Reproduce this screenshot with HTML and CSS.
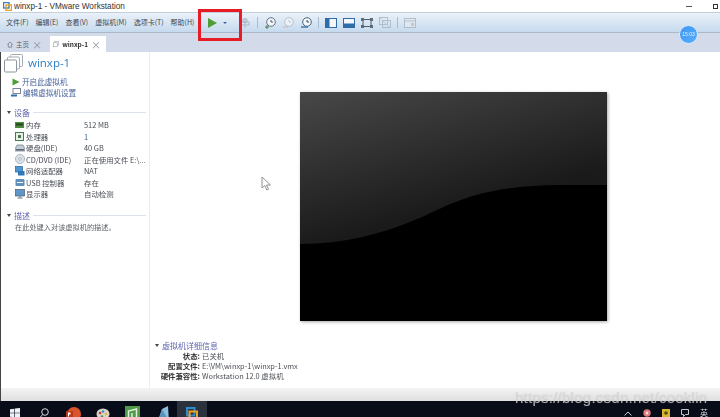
FILE: index.html
```html
<!DOCTYPE html>
<html lang="zh-CN">
<head>
    <meta charset="UTF-8">
    <title>winxp-1 - VMware Workstation</title>
    <link rel="stylesheet" href="styles.css">
</head>
<body>
    <div class="window">
        <!-- Title bar -->
        <div class="titlebar">
            <svg class="app-icon" width="9" height="9" viewBox="0 0 9 9"><rect x="0.5" y="0.5" width="5.5" height="5.5" fill="none" stroke="#3c7fb8" stroke-width="1.4"/><rect x="3" y="3" width="5.5" height="5.5" fill="none" stroke="#e8a020" stroke-width="1.4"/></svg>
            <span class="title-text">winxp-1 - VMware Workstation</span>
            <span class="win-min"></span>
            <span class="win-max"></span>
        </div>

        <!-- Menu and toolbar -->
        <div class="toolbar">
            <div class="menus">
                <span class="menu">文件(F)</span>
                <span class="menu">编辑(E)</span>
                <span class="menu">查看(V)</span>
                <span class="menu">虚拟机(M)</span>
                <span class="menu">选项卡(T)</span>
                <span class="menu">帮助(H)</span>
            </div>
            <svg class="tool-play" width="9" height="10" viewBox="0 0 9 10"><path d="M0 0 L9 5 L0 10Z" fill="#4f9e35"/></svg>
            <span class="caret"></span>
            <svg class="tool" width="12" height="12" viewBox="0 0 12 12"><path d="M6 1v10M2 5h8v3H2zM4 2h4v3H4z" fill="none" stroke="#a9b6c4"/></svg>
            <span class="tool-sep"></span>
            <svg class="tool" width="12" height="12" viewBox="0 0 12 12"><circle cx="7" cy="5" r="4.3" fill="#f3f6fa" stroke="#5d7286"/><path d="M7 3v2h2" fill="none" stroke="#44586a"/><path d="M1 10h4M3 8v4" stroke="#4b7f50"/></svg>
            <svg class="tool dim" width="12" height="12" viewBox="0 0 12 12"><circle cx="7" cy="5" r="4.3" fill="#f3f6fa" stroke="#aab4bf"/><path d="M7 3v2h2" fill="none" stroke="#b8c0c8"/><path d="M1 10h5" stroke="#c9a99a"/></svg>
            <svg class="tool" width="12" height="12" viewBox="0 0 12 12"><circle cx="7" cy="5" r="4.3" fill="#f3f6fa" stroke="#4a6478"/><path d="M7 3v2h2" fill="none" stroke="#34495a"/><path d="M1 10h7" stroke="#2f78b5" stroke-width="1.4"/></svg>
            <span class="tool-sep"></span>
            <svg class="tool" width="12" height="10" viewBox="0 0 12 10"><rect x="0.5" y="0.5" width="11" height="9" fill="#f4f8fc" stroke="#2e6da8"/><rect x="0.5" y="0.5" width="4" height="9" fill="#2e6da8"/></svg>
            <svg class="tool" width="12" height="10" viewBox="0 0 12 10"><rect x="0.5" y="0.5" width="11" height="9" fill="#f4f8fc" stroke="#2e6da8"/><rect x="0.5" y="5.5" width="11" height="4" fill="#2e6da8"/></svg>
            <svg class="tool" width="12" height="10" viewBox="0 0 12 10"><rect x="2" y="1.5" width="8" height="7" fill="none" stroke="#4f5f6e"/><path d="M0 0h3v3H0zM9 0h3v3H9zM0 7h3v3H0zM9 7h3v3H9z" fill="#5c6c7b"/></svg>
            <svg class="tool dim" width="12" height="11" viewBox="0 0 12 11"><rect x="0.5" y="0.5" width="8" height="7" fill="none" stroke="#a5b0bc"/><rect x="3.5" y="3.5" width="8" height="7" fill="none" stroke="#a5b0bc"/><path d="M1 1l9 9" stroke="#b5bec8"/></svg>
            <span class="tool-sep"></span>
            <svg class="tool dim" width="12" height="10" viewBox="0 0 12 10"><rect x="0.5" y="0.5" width="11" height="9" fill="#e4e9ef" stroke="#a5b0bc"/><path d="M0 3h12" stroke="#a5b0bc"/><rect x="7" y="5" width="3" height="3" fill="#b8c1cb"/></svg>
        </div>

        <!-- Tabs -->
        <div class="tabs">
            <div class="tab">
                <svg width="9" height="9" viewBox="0 0 9 9"><path d="M0.5 4.5 L4.5 0.8 L8.5 4.5 M2 3.8V8.5H7V3.8" fill="none" stroke="#66707c"/></svg>
                <span class="tab-name">主页</span>
                <span class="tab-close">×</span>
            </div>
            <div class="tab active">
                <svg width="10" height="10" viewBox="0 0 10 10"><rect x="3" y="0.5" width="6.5" height="6" fill="#fff" stroke="#9aa3ad"/><rect x="0.5" y="3" width="6.5" height="6.5" fill="#fff" stroke="#9aa3ad"/></svg>
                <span class="tab-name">winxp-1</span>
                <span class="tab-close">×</span>
            </div>
        </div>

        <div class="body">
            <!-- Left panel -->
            <div class="sidebar">
                <div class="vm-head">
                    <svg width="19" height="19" viewBox="0 0 19 19"><rect x="6.5" y="0.5" width="12" height="12" rx="1" fill="#fff" stroke="#a3abb4"/><rect x="3.5" y="3" width="12" height="12" rx="1" fill="#fff" stroke="#a3abb4"/><rect x="0.5" y="6" width="12" height="12" rx="1" fill="#fff" stroke="#8c959f"/></svg>
                    <span class="vm-name">winxp-1</span>
                </div>
                <div class="action">
                    <svg width="8" height="8" viewBox="0 0 8 8"><path d="M0.5 0.5 L7.5 4 L0.5 7.5Z" fill="#4f9e35"/></svg>
                    <span>开启此虚拟机</span>
                </div>
                <div class="action">
                    <svg width="10" height="9" viewBox="0 0 10 9"><rect x="2" y="0.5" width="7.5" height="5" fill="#fff" stroke="#7d8894"/><path d="M0 7.5h6" stroke="#2f6ea8" stroke-width="2"/></svg>
                    <span>编辑虚拟机设置</span>
                </div>

                <div class="section-head devices"><span class="arrow"></span><span class="section-title">设备</span><span class="section-line"></span></div>
                <div class="device-list">
                    <svg width="9" height="8" viewBox="0 0 9 8"><rect y="1" width="9" height="6" fill="#4d8a3c"/><rect x="1" y="2.5" width="7" height="2" fill="#26431f"/></svg>
                    <span>内存</span><span>512 MB</span>
                    <svg width="9" height="9" viewBox="0 0 9 9"><rect x="0.5" y="0.5" width="8" height="8" fill="#e9f1e6" stroke="#447a4a"/><rect x="3" y="3" width="3" height="3" fill="#447a4a"/></svg>
                    <span>处理器</span><span class="num">1</span>
                    <svg width="10" height="8" viewBox="0 0 10 8"><path d="M2 1h6l2 4v2H0V5z" fill="#c4ccd4" stroke="#6f7a86" stroke-width="0.7"/><rect x="1" y="5" width="8" height="1.5" fill="#5d6975"/></svg>
                    <span>硬盘(IDE)</span><span>40 GB</span>
                    <svg width="10" height="10" viewBox="0 0 10 10"><circle cx="5" cy="5" r="4.6" fill="#dbe1e8" stroke="#9aa4ae" stroke-width="0.7"/><circle cx="5" cy="5" r="1.3" fill="#fff" stroke="#8a949e" stroke-width="0.6"/></svg>
                    <span>CD/DVD (IDE)</span><span>正在使用文件 E:\...</span>
                    <svg width="10" height="10" viewBox="0 0 10 10"><rect x="0.5" y="0.5" width="7" height="5.5" fill="#4e95d3" stroke="#2d6496" stroke-width="0.7"/><rect x="3" y="5" width="6.5" height="4.5" fill="#2f77b8"/></svg>
                    <span>网络适配器</span><span>NAT</span>
                    <svg width="10" height="9" viewBox="0 0 10 9"><rect x="0.5" y="1" width="9" height="7" rx="1" fill="#5f8fbd"/><path d="M2 4.5h6" stroke="#fff"/></svg>
                    <span>USB 控制器</span><span>存在</span>
                    <svg width="10" height="10" viewBox="0 0 10 10"><rect x="0.5" y="0.5" width="9" height="6.5" fill="#5f95c9" stroke="#4a5e72" stroke-width="0.7"/><path d="M2.5 9h5M5 7v2" stroke="#6a7886"/></svg>
                    <span>显示器</span><span>自动检测</span>
                </div>

                <div class="section-head describe"><span class="arrow"></span><span class="section-title">描述</span><span class="section-line"></span></div>
                <p class="describe-text">在此处键入对该虚拟机的描述。</p>
            </div>

            <!-- Right panel -->
            <div class="content">
                <svg class="preview" width="307" height="229" viewBox="0 0 307 229">
                    <defs>
                        <linearGradient id="gloss" gradientUnits="userSpaceOnUse" x1="0" y1="0" x2="39" y2="147">
                            <stop offset="0" stop-color="#484848"/>
                            <stop offset="1" stop-color="#1a1a1a"/>
                        </linearGradient>
                    </defs>
                    <rect width="307" height="229" fill="url(#gloss)"/>
                    <path d="M0 152 C55 152 100 136 137 118 C165 105 195 93 265 93 L307 93 V229 H0Z" fill="#000"/>
                </svg>
                <div class="details">
                    <div class="details-head"><span class="arrow"></span><span class="section-title">虚拟机详细信息</span></div>
                    <div class="details-grid">
                        <b>状态:</b><span>已关机</span>
                        <b>配置文件:</b><span>E:\VM\winxp-1\winxp-1.vmx</span>
                        <b>硬件兼容性:</b><span>Workstation 12.0 虚拟机</span>
                    </div>
                </div>
            </div>
        </div>

        <div class="statusbar"></div>

        <!-- Windows taskbar, cut off by the bottom edge of the shot -->
        <div class="taskbar">
            <span class="task-slot"><svg width="10" height="10" viewBox="0 0 10 10"><path d="M0 1.3L4.4 .7V4.7H0zM5 .6L10 0V4.7H5zM0 5.3H4.4V9.3L0 8.7zM5 5.3H10V10L5 9.4z" fill="#eef2f6"/></svg></span>
            <span class="task-slot"><svg width="10" height="11" viewBox="0 0 10 11"><circle cx="6" cy="4" r="3.3" fill="none" stroke="#d5d9de"/><path d="M3.6 6.5L.7 10" stroke="#d5d9de"/></svg></span>
            <span class="task-slot"><svg width="15" height="15" viewBox="0 0 15 15"><circle cx="8" cy="8" r="7" fill="#d9542b"/><rect x="0" y="5" width="7" height="7" fill="#b7391a"/><path d="M2 6.5h2.5v2H3V10.5H2z" fill="#fff"/></svg></span>
            <span class="task-slot"><svg width="14" height="14" viewBox="0 0 14 14"><ellipse cx="7" cy="8" rx="6.5" ry="5.5" fill="#d8d3c8"/><circle cx="4" cy="7" r="1.3" fill="#c33"/><circle cx="7" cy="5.5" r="1.3" fill="#3a8fd0"/><circle cx="10" cy="8" r="1.3" fill="#e4b72f"/><circle cx="6" cy="10.5" r="1.3" fill="#4b9c46"/></svg></span>
            <span class="task-slot"><svg width="15" height="15" viewBox="0 0 15 15"><rect width="15" height="15" fill="#4e9a47"/><path d="M3.5 12V5l8-2v9" fill="none" stroke="#dff0da" stroke-width="1.5"/><path d="M7 12V7" stroke="#dff0da" stroke-width="1.5"/></svg></span>
            <span class="task-slot"><svg width="13" height="15" viewBox="0 0 13 15"><path d="M2 15L6 3 12 0 13 15Z" fill="#8fbede"/><path d="M6 3L13 15H2Z" fill="#5a93bd"/></svg></span>
            <span class="task-slot active"><svg width="12" height="13" viewBox="0 0 12 13"><rect x="1" y="1" width="7.5" height="7.5" fill="none" stroke="#2e8bd0" stroke-width="2"/><rect x="3.5" y="4.5" width="7.5" height="7.5" fill="none" stroke="#eda31f" stroke-width="2"/></svg></span>
            <span class="tray">
                <svg width="8" height="5" viewBox="0 0 8 5"><path d="M.5 4.5L4 1l3.5 3.5" fill="none" stroke="#c5c9ce"/></svg>
                <svg width="8" height="8" viewBox="0 0 8 8"><circle cx="4" cy="4" r="3.7" fill="#d97a7a"/><circle cx="4" cy="4" r="1.5" fill="#f3d6d6"/></svg>
                <svg width="8" height="8" viewBox="0 0 8 8"><rect width="8" height="8" fill="#d7b52e"/><circle cx="4" cy="4" r="1.8" fill="#554a12"/></svg>
                <svg width="8" height="8" viewBox="0 0 8 8"><path d="M.5.5h7v5H4.5L2.5 7.5V5.5H.5z" fill="none" stroke="#c5c9ce"/></svg>
                <span class="tray-lang">英</span>
            </span>
        </div>

        <!-- Things lying over the screenshot -->
        <div class="highlight"></div>
        <div class="clock-badge">15:03</div>
        <svg class="cursor" width="11" height="15" viewBox="0 0 11 15"><path d="M1 1V12L3.8 9.5 5.8 14 7.5 13.2 5.5 9H9.5Z" fill="#fff" stroke="#777" stroke-width="0.8"/></svg>
        <div class="watermark">https://blog.csdn.net/cooklin</div>
    </div>
</body>
</html>
```

FILE: styles.css
```css
* {
    margin: 0;
    padding: 0;
    box-sizing: border-box;
}

html, body {
    width: 720px;
    height: 417px;
    overflow: hidden;
}

body {
    font-family: "Noto Sans CJK SC", "Liberation Sans", sans-serif;
    font-size: 8px;
    line-height: 11px;
    color: #444;
    background-color: #fff;
}

.window {
    position: relative;
    display: flex;
    flex-direction: column;
    width: 720px;
    height: 417px;
    filter: blur(0.35px);
}

/* Title bar */
.titlebar {
    display: flex;
    align-items: center;
    height: 12px;
    padding-left: 3px;
    background-color: #fff;
}

.app-icon {
    margin-right: 2px;
}

.title-text {
    font-family: "Liberation Sans", sans-serif;
    font-size: 8.2px;
    color: #333;
    white-space: nowrap;
}

.win-min {
    width: 6px;
    height: 1px;
    margin-left: auto;
    margin-right: 21px;
    background-color: #555;
}

.win-max {
    width: 5px;
    height: 5px;
    margin-right: 2px;
    border: 1px solid #333;
}

/* Toolbar */
.toolbar {
    display: flex;
    align-items: center;
    height: 21px;
    padding-left: 6px;
    border-top: 1px solid #c3d0db;
    border-bottom: 1px solid #aab8c9;
    background: linear-gradient(#eaf1f9, #c6daee);
}

.menus {
    display: flex;
    gap: 7px;
    width: 202px;
}

.menu {
    font-size: 7px;
    color: #3d4650;
    white-space: nowrap;
}

.tool-sep {
    width: 1px;
    height: 11px;
    margin-right: 6px;
    background-color: #a9bccf;
}

.caret {
    width: 0;
    height: 0;
    margin-left: 6px;
    margin-right: 12px;
    border-left: 2.5px solid transparent;
    border-right: 2.5px solid transparent;
    border-top: 2.5px solid #3f5fa0;
}

.tool {
    margin-right: 6px;
}

.tool.dim {
    opacity: 0.75;
}

/* Tabs */
.tabs {
    display: flex;
    align-items: flex-end;
    gap: 3px;
    height: 19px;
    padding-left: 3px;
    background-color: #d3daea;
}

.tab {
    display: flex;
    align-items: center;
    gap: 3px;
    width: 44px;
    height: 16px;
    padding-left: 4px;
    font-size: 6.5px;
    color: #5b6470;
}

.tab.active {
    width: 56px;
    padding-left: 3px;
    background-color: #fff;
    color: #333;
    font-weight: 700;
}

.tab-name {
    flex: none;
    white-space: nowrap;
}

.tab-close {
    margin-left: auto;
    margin-right: 5px;
    font-size: 10px;
    font-weight: 400;
    color: #8a94a2;
}

/* Main area */
.body {
    display: flex;
    flex: 1;
    min-height: 0;
    border-left: 1px solid #444;
}

.sidebar {
    width: 149px;
    padding-top: 2px;
    border-right: 1px solid #e6edf4;
}

.vm-head {
    display: flex;
    align-items: center;
    gap: 5px;
    height: 19px;
    margin-bottom: 3px;
    padding-left: 3px;
}

.vm-name {
    padding-bottom: 2px;
    font-family: "Open Sans", "Liberation Sans", sans-serif;
    font-size: 11.5px;
    color: #2f7fc4;
}

.action {
    display: flex;
    align-items: center;
    gap: 2px;
    height: 11px;
    padding-left: 11px;
    font-size: 7.6px;
    color: #47639a;
}

.action + .action {
    padding-left: 10px;
}

.section-head {
    display: flex;
    align-items: center;
    height: 11px;
    padding-left: 6px;
}

.section-head.devices {
    margin-top: 9px;
}

.section-head.describe {
    margin-top: 10px;
}

.arrow {
    width: 0;
    height: 0;
    margin-right: 3px;
    border-left: 2.5px solid transparent;
    border-right: 2.5px solid transparent;
    border-top: 3px solid #444;
}

.section-title {
    font-size: 8px;
    color: #5d63ae;
}

.section-line {
    flex: 1;
    height: 1px;
    margin-left: 3px;
    margin-right: 3px;
    background-color: #dde3ea;
}

.device-list {
    display: grid;
    grid-template-columns: 10px 58px 1fr;
    grid-auto-rows: 11.5px;
    align-items: center;
    margin-top: 1px;
    padding-left: 14px;
    font-size: 7.4px;
    white-space: nowrap;
    color: #484d54;
}

.device-list span {
    padding-left: 1px;
}

.device-list .num {
    color: #2f5f9c;
}

.describe-text {
    margin-top: 1px;
    padding-left: 14px;
    font-size: 7.2px;
    color: #5a5f66;
}

.content {
    display: flex;
    flex: 1;
    flex-direction: column;
    min-width: 0;
}

.preview {
    display: block;
    margin-top: 40px;
    margin-left: 150px;
    box-shadow: 1px 1px 3px rgba(0, 0, 0, 0.35);
}

.details {
    margin-top: 19px;
    padding-left: 5px;
}

.details-head {
    display: flex;
    align-items: center;
    height: 11px;
}

.details-grid {
    display: grid;
    grid-template-columns: 45px 1fr;
    grid-auto-rows: 10px;
    column-gap: 2px;
    font-size: 7.4px;
    line-height: 10px;
    color: #4a4f55;
}

.details-grid b {
    text-align: right;
    white-space: nowrap;
    color: #333;
}

/* Bottom bars */
.statusbar {
    height: 13px;
    border-left: 1px solid #444;
    background: linear-gradient(#f4f4f4, #dfdfdf);
}

.taskbar {
    display: flex;
    flex: none;
    align-items: flex-start;
    height: 16px;
    overflow: hidden;
    background-color: #080c18;
}

.task-slot {
    display: flex;
    flex: none;
    align-items: center;
    justify-content: center;
    width: 29.5px;
    height: 24px;
}

.task-slot.active {
    background-color: #2c323d;
}

.tray {
    display: flex;
    align-items: center;
    gap: 11px;
    height: 24px;
    margin-left: auto;
    margin-right: 12px;
}

.tray-lang {
    font-size: 8px;
    line-height: 8px;
    color: #d5d9de;
}

/* Overlays */
.highlight {
    position: absolute;
    left: 198px;
    top: 9px;
    width: 44px;
    height: 32px;
    border: 3px solid #e81c26;
}

.clock-badge {
    position: absolute;
    left: 679px;
    top: 25px;
    width: 19px;
    height: 19px;
    border: 1px solid #d6e8fb;
    border-radius: 50%;
    background: linear-gradient(135deg, #3f97f0, #56adff);
    font-family: "Liberation Sans", sans-serif;
    font-size: 5px;
    line-height: 17px;
    text-align: center;
    color: #e6f2ff;
}

.cursor {
    position: absolute;
    left: 261px;
    top: 176px;
}

.watermark {
    position: absolute;
    left: 515px;
    top: 391px;
    font-family: "Liberation Sans", sans-serif;
    font-size: 15px;
    line-height: 14px;
    letter-spacing: 0.25px;
    color: rgba(235, 235, 235, 0.62);
    text-shadow: 0 0 1px rgba(130, 130, 130, 0.5);
}
```
